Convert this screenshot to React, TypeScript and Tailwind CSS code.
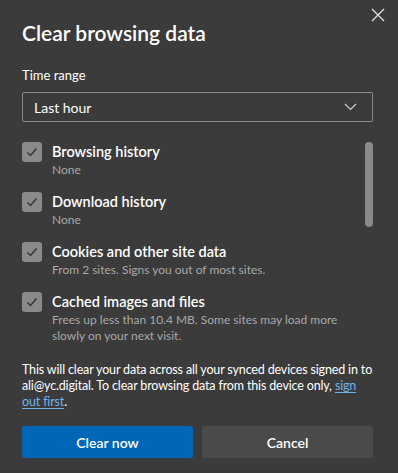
import React from 'react';

const items = [
  { title: 'Browsing history', desc: 'None' },
  { title: 'Download history', desc: 'None' },
  { title: 'Cookies and other site data', desc: 'From 2 sites. Signs you out of most sites.' },
  { title: 'Cached images and files', desc: 'Frees up less than 10.4 MB. Some sites may load more slowly on your next visit.' },
];

function Check() {
  return (
    <div className="flex h-5 w-5 shrink-0 items-center justify-center rounded-[3px] bg-[#8a8a8a]">
      <svg width="14" height="14" viewBox="0 0 14 14" fill="none">
        <path d="M2.5 7.5 L5.5 10.5 L11.5 3.5" stroke="#333" strokeWidth="1.4" />
      </svg>
    </div>
  );
}

export default function App() {
  return (
    <div
      className="relative h-[473px] w-[398px] overflow-hidden bg-[#3b3b3b] pl-[22px] pr-[25px] pt-[19px] text-white"
      style={{ fontFamily: '"Segoe UI", Lato, sans-serif' }}
    >
      {/* close */}
      <button className="absolute right-[13px] top-[8px] p-0">
        <svg width="14" height="14" viewBox="0 0 14 14" fill="none">
          <path d="M1 1 L13 13 M13 1 L1 13" stroke="#e6e6e6" strokeWidth="1.2" />
        </svg>
      </button>

      <h1 className="text-[21px] font-semibold leading-[28px]">Clear browsing data</h1>

      <div className="mt-[20px] text-[13px] leading-[16px]">Time range</div>

      <div className="mt-[9px] flex h-[30px] items-center justify-between rounded-[2px] border border-[#8a8a8a] pl-[11px] pr-[15px]">
        <span className="text-[14px]">Last hour</span>
        <svg width="13" height="8" viewBox="0 0 13 8" fill="none">
          <path d="M1 1 L6.5 6.5 L12 1" stroke="#cfcfcf" strokeWidth="1.2" />
        </svg>
      </div>

      {/* list */}
      <div className="relative mt-[20px] flex pr-[24px]">
        <div className="flex flex-col gap-[14px]">
          {items.map((it) => (
            <div key={it.title} className="flex gap-[10px]">
              <Check />
              <div className="flex flex-col">
                <span className="text-[14.5px] font-semibold leading-[20px]">{it.title}</span>
                <span className="text-[12px] leading-[16px] text-[#a8a8a8]">{it.desc}</span>
              </div>
            </div>
          ))}
        </div>
        <div className="absolute right-0 top-0 h-[85px] w-[8px] rounded-full bg-[#8a8a8a]" />
      </div>

      <p className="-mr-[4px] mt-[18px] text-[12.5px] leading-[16px] tracking-[-0.15px]">
        This will clear your data across all your synced devices signed in to ali@yc.digital. To clear browsing
        data from this device only,{' '}
        <a className="text-[#6cb4f0] underline underline-offset-2">sign out first</a>.
      </p>

      <div className="mt-[16px] flex gap-[9px]">
        <button className="h-[32px] flex-1 rounded-[2px] bg-[#0067b8] text-[14px] font-semibold">Clear now</button>
        <button className="h-[32px] flex-1 rounded-[2px] bg-[#4a4a4a] text-[14px] font-semibold">Cancel</button>
      </div>
    </div>
  );
}
